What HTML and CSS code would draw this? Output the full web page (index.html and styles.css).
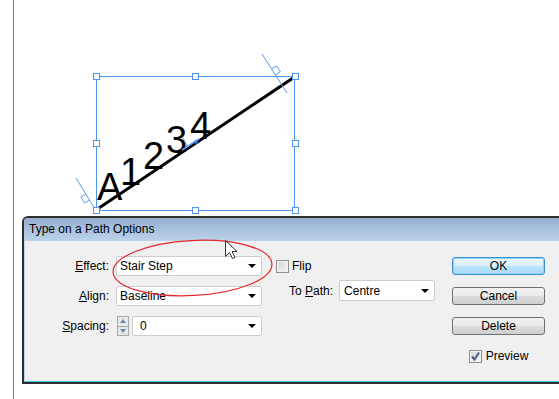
FILE: index.html
```html
<!DOCTYPE html>
<html lang="en">
<head>
    <meta charset="UTF-8">
    <title>Type on a Path Options</title>
    <link rel="stylesheet" href="styles.css">
</head>
<body>
    <div class="page">
        <!-- artboard: path type on a diagonal line -->
        <svg class="artboard" viewBox="14 0 545 216" width="545" height="216">
            <rect x="96.5" y="76.5" width="198" height="134" fill="none" stroke="#4f94f2" stroke-width="1"/>
            <line x1="96" y1="210" x2="293" y2="78" stroke="#000" stroke-width="3"/>
            <g class="path-text">
                <text x="97" y="200">A</text>
                <text x="120" y="185">1</text>
                <text x="143" y="169">2</text>
                <text x="166" y="153">3</text>
                <text x="190" y="139">4</text>
            </g>
            <g stroke="#5a9cf5" stroke-width="1" fill="none">
                <line x1="76" y1="178" x2="98" y2="214"/>
                <polyline points="86,194 80.9,197.1 84.5,203.1 89.6,200"/>
                <line x1="262" y1="54" x2="287" y2="93"/>
                <polyline points="271.6,69 276.6,65.8 280.4,71.7 275.4,74.9"/>
                <line x1="183" y1="138" x2="187" y2="146"/>
                <line x1="182" y1="150" x2="199" y2="139" stroke-width="1.5"/>
            </g>
            <rect x="194.5" y="140.5" width="3" height="3" fill="#3a86f0"/>
            <g fill="#fff" stroke="#4f94f2" stroke-width="1">
                <rect x="93.5" y="73.5" width="6" height="6"/>
                <rect x="192.5" y="73.5" width="6" height="6"/>
                <rect x="292.5" y="73.5" width="6" height="6"/>
                <rect x="93.5" y="140.5" width="6" height="6"/>
                <rect x="292.5" y="140.5" width="6" height="6"/>
                <rect x="93.5" y="207.5" width="6" height="6"/>
                <rect x="192.5" y="207.5" width="6" height="6"/>
                <rect x="292.5" y="207.5" width="6" height="6"/>
            </g>
        </svg>

        <section class="dialog">
            <header class="titlebar">Type on a Path Options</header>
            <div class="dialog-body">
                <div class="fields">
                    <span class="field-label"><u>E</u>ffect:</span>
                    <div class="select"><span>Stair Step</span><i class="caret"></i></div>

                    <span class="field-label"><u>A</u>lign:</span>
                    <div class="select"><span>Baseline</span><i class="caret"></i></div>

                    <span class="field-label"><u>S</u>pacing:</span>
                    <div class="spin-field">
                        <div class="spinner">
                            <span class="spin-half"><i class="spin-up"></i></span>
                            <span class="spin-half"><i class="spin-down"></i></span>
                        </div>
                        <div class="select narrow"><span>0</span><i class="caret"></i></div>
                    </div>
                </div>

                <div class="middle">
                    <div class="check-row"><span class="checkbox"></span>Flip</div>
                    <div class="path-row">
                        <span>To <u>P</u>ath:</span>
                        <div class="select path"><span>Centre</span><i class="caret"></i></div>
                    </div>
                </div>

                <div class="buttons">
                    <button class="btn btn-default">OK</button>
                    <button class="btn">Cancel</button>
                    <button class="btn">Delete</button>
                    <div class="check-row preview">
                        <span class="checkbox">
                            <svg width="11" height="11" viewBox="0 0 11 11"><path d="M2 5.5 L4.5 8.5 L9 1.5" fill="none" stroke="#4a5d8f" stroke-width="2"/></svg>
                        </span>Preview
                    </div>
                </div>
            </div>
        </section>
    </div>

    <!-- red annotation ellipse and mouse pointer drawn over the screen -->
    <svg class="overlay" width="559" height="399" viewBox="0 0 559 399">
        <ellipse cx="192.5" cy="268" rx="79.5" ry="27.5" transform="rotate(-3 192.5 268)" fill="none" stroke="#e4282c" stroke-width="1.2"/>
        <path d="M225.5 240.5 L225.5 256.5 L229.5 252.5 L232.5 258.5 L235 257.3 L232 251.5 L237 251.5 Z" fill="#fff" stroke="#333" stroke-width="1"/>
    </svg>
</body>
</html>
```

FILE: styles.css
```css
* {
    box-sizing: border-box;
}

body {
    margin: 0;
    width: 559px;
    height: 399px;
    overflow: hidden;
    position: relative;
    background: #fff;
    font-family: "Liberation Sans", Arial, sans-serif;
    font-size: 12px;
    color: #000;
}

.page {
    margin-left: 13px;
    border-left: 1px solid #9b4ee2;
    height: 399px;
}

.artboard {
    display: block;
}

.path-text text {
    font-family: "Liberation Sans", Arial, sans-serif;
    font-size: 38px;
    fill: #000;
}

.dialog {
    margin-left: 8px;
    width: 560px;
    border: 2px solid #2e2e2e;
    border-radius: 6px 6px 0 0;
    background: #f0f0f0;
}

.titlebar {
    height: 23px;
    line-height: 23px;
    padding-left: 5px;
    border-radius: 4px 4px 0 0;
    background: linear-gradient(#93afd0, #bdd3eb);
}

.dialog-body {
    display: flex;
    align-items: flex-start;
    height: 141px;
    padding: 15px 0 0 24px;
    border-left: 1px solid #bed5ee;
    border-bottom: 1px solid #3cc6e6;
}

.fields {
    display: grid;
    grid-template-columns: 60px 146px;
    grid-auto-rows: 20px;
    column-gap: 7px;
    row-gap: 10px;
    align-items: center;
}

.field-label {
    justify-self: end;
}

.select {
    display: flex;
    align-items: center;
    justify-content: space-between;
    height: 20px;
    padding: 0 5px 0 3px;
    background: #fff;
    border: 1px solid #cdcdcd;
    border-radius: 2px;
}

.select.narrow {
    flex: 1;
    padding-left: 7px;
}

.select.path {
    width: 96px;
    height: 21px;
    padding-left: 4px;
}

.caret {
    width: 0;
    height: 0;
    border-left: 4px solid transparent;
    border-right: 4px solid transparent;
    border-top: 4px solid #000;
}

.spin-field {
    display: flex;
    gap: 3px;
    height: 20px;
    padding-left: 1px;
}

.spinner {
    display: flex;
    flex-direction: column;
    width: 12px;
    border: 1px solid #a9a9a9;
    background: #e8e8e8;
}

.spin-half {
    flex: 1;
    display: flex;
    align-items: center;
    justify-content: center;
}

.spin-half + .spin-half {
    border-top: 1px solid #a9a9a9;
}

.spin-up {
    border-left: 3px solid transparent;
    border-right: 3px solid transparent;
    border-bottom: 4px solid #6d88b8;
}

.spin-down {
    border-left: 3px solid transparent;
    border-right: 3px solid transparent;
    border-top: 4px solid #6d88b8;
}

.middle {
    display: flex;
    flex-direction: column;
    gap: 4px;
    margin-left: 14px;
    width: 161px;
}

.check-row {
    display: flex;
    align-items: center;
    gap: 3px;
    height: 20px;
}

.checkbox {
    display: flex;
    align-items: center;
    justify-content: center;
    width: 13px;
    height: 13px;
    border: 1px solid #8e8f8f;
    background: linear-gradient(135deg, #d4d4d4, #f7f7f7);
    box-shadow: inset 0 0 0 1px #f4f4f4;
}

.path-row {
    display: flex;
    align-items: center;
    gap: 6px;
    margin-left: 13px;
}

.buttons {
    display: flex;
    flex-direction: column;
    gap: 12px;
    margin-left: 15px;
    padding-top: 1px;
    width: 93px;
}

.btn {
    height: 18px;
    padding: 0;
    font-family: inherit;
    font-size: 12px;
    line-height: 16px;
    color: #000;
    border: 1px solid #707070;
    border-radius: 3px;
    background: linear-gradient(#f2f2f2 0%, #ebebeb 50%, #dddddd 50%, #cfcfcf 100%);
}

.btn-default {
    border-color: #3c8fd0;
    box-shadow: inset 0 0 0 1px #8fd6f7;
    background: linear-gradient(#eaf6fd 0%, #d9f0fc 50%, #bee6fd 50%, #a7d9f5 100%);
}

.check-row.preview {
    justify-content: center;
    gap: 4px;
    margin-top: 2px;
    height: 14px;
}

.overlay {
    position: absolute;
    left: 0;
    top: 0;
    pointer-events: none;
}
```
